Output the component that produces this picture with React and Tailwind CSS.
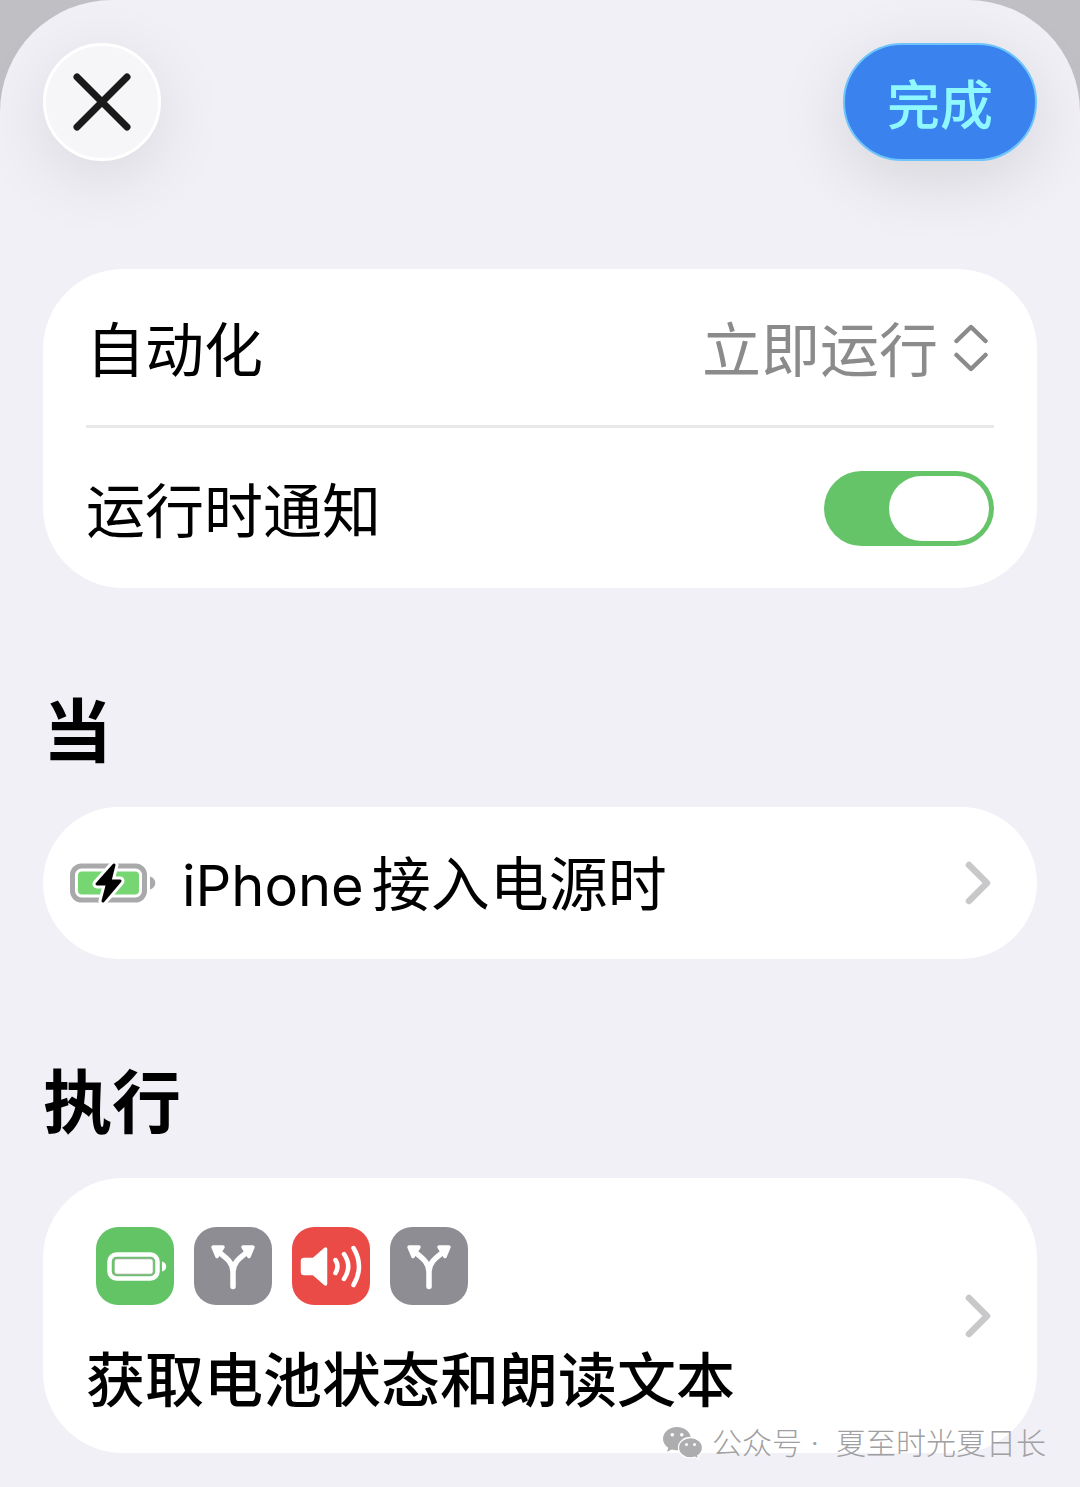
import { useState } from 'react';

const MODES = ['立即运行', '运行前询问'];

const ACTIONS = [
  { name: '获取电池状态', icon: BatteryIcon, color: 'bg-[#63c466]' },
  { name: '如果', icon: BranchIcon, color: 'bg-[#8e8d93]' },
  { name: '朗读文本', icon: SpeakerIcon, color: 'bg-[#eb4b46]' },
  { name: '结束如果', icon: BranchIcon, color: 'bg-[#8e8d93]' },
];

function BatteryIcon() {
  return (
    <svg viewBox="0 0 78 78" className="size-full" fill="none" aria-hidden="true">
      <rect x="13.5" y="27.5" width="48" height="24" rx="7" stroke="#fff" strokeWidth="4.5" />
      <rect x="18" y="31.5" width="39.5" height="16" rx="3" fill="#fff" stroke="#8fb591" strokeWidth="1.5" />
      <path d="M66 34.5c2.6.6 4.2 2.4 4.2 5s-1.6 4.4-4.2 5z" fill="#fff" />
    </svg>
  );
}

function BranchIcon() {
  return (
    <svg viewBox="0 0 78 78" className="size-full" fill="none" stroke="#fff" aria-hidden="true">
      <path d="M39 59.5V45C39 36 33 31.5 26 26M39 45C39 36 45 31.5 52 26" strokeWidth="5.5" strokeLinecap="round" />
      <path d="M19 20h10L23 29.500zM59 20h-10L55 29.500z" fill="#fff" strokeWidth="3.5" strokeLinejoin="round" />
    </svg>
  );
}

function SpeakerIcon() {
  return (
    <svg viewBox="0 0 78 78" className="size-full" fill="none" stroke="#fff" aria-hidden="true">
      <path d="M12 32.5h9.5L33.5 22v35L21.5 46.5H12c-1 0-1.5-.5-1.5-1.5V34c0-1 .5-1.5 1.5-1.5z" fill="#fff" strokeWidth="3.5" strokeLinejoin="round" />
      <path d="M43.5 33q4 6.5 0 13M52 27q8.5 12.5 0 25M61.5 21q11 18.5 0 37" strokeWidth="4.5" strokeLinecap="round" />
    </svg>
  );
}

function ChargingIcon() {
  const bolt = 'M44 2L27 21h10.5L33 38 50 18H40z';
  return (
    <svg viewBox="0 0 86 40" className="h-10 w-[86px] shrink-0" fill="none" aria-hidden="true">
      <rect x="2.5" y="3" width="72" height="34" rx="9" stroke="#a9a9ab" strokeWidth="5" />
      <rect x="8" y="8.5" width="61" height="23" rx="4" fill="#76d672" />
      <path d="M80 13.5c3.3.8 5.3 3.4 5.3 6.5s-2 5.700-5.300 6.500z" fill="#a9a9ab" />
      <path d={bolt} fill="#fff" stroke="#fff" strokeWidth="9" strokeLinejoin="round" />
      <path d={bolt} fill="#000" stroke="#000" strokeWidth="3" strokeLinejoin="round" />
    </svg>
  );
}

function Chevron() {
  return (
    <svg viewBox="0 0 30 46" className="h-[46px] w-[30px] shrink-0" fill="none" aria-hidden="true">
      <path d="M5 5l18 18L5 41" stroke="#c8c8ca" strokeWidth="6.5" strokeLinecap="round" strokeLinejoin="round" />
    </svg>
  );
}

function WechatIcon() {
  return (
    <svg viewBox="0 0 40 34" className="h-[34px] w-10 shrink-0" aria-hidden="true">
      <path d="M14 1C6.3 1 0 6.2 0 12.8c0 3.7 2 6.9 5.2 9l-1.2 4 4.8-2.4c1.6.5 3.4.8 5.2.8 7.7 0 14-5 14-11.4S21.7 1 14 1z" fill="#adadaf" />
      <path d="M27.5 11.5c-6.6 0-12 4.5-12 10.2s5.4 10.1 12 10.1c1.6 0 3-.2 4.3-.7l4 2-1-3.4c2.9-1.8 4.7-4.7 4.7-8 0-5.7-5.4-10.2-12-10.2z" fill="#adadaf" stroke="#fff" strokeWidth="1.3" />
      <g fill="#fff">
        <circle cx="9.3" cy="8.8" r="1.8" />
        <circle cx="18.8" cy="8.8" r="1.8" />
        <circle cx="23.5" cy="18.5" r="1.5" />
        <circle cx="31.5" cy="18.5" r="1.5" />
      </g>
    </svg>
  );
}

const App = () => {
  const [mode, setMode] = useState(MODES[0]);
  const [notify, setNotify] = useState(true);

  return (
    <div className="bg-[#c0bfc4] font-['Noto_Sans_CJK_SC',sans-serif] text-[59px] leading-[80px] text-black">
      <div className="relative min-h-screen rounded-t-[112px] bg-[#f1f0f6] px-[43px] pt-[43px] pb-[34px]">
        <header className="flex items-center justify-between">
          <button
            type="button"
            aria-label="关闭"
            className="flex size-[118px] items-center justify-center rounded-full border-3 border-white bg-[#f6f6f8] shadow-[0_16px_70px_rgba(0,0,0,0.1)]"
          >
            <svg viewBox="0 0 58 58" className="size-[58px]" aria-hidden="true">
              <path d="M4 4l50 50M54 4L4 54" stroke="#1a1a1a" strokeWidth="7" strokeLinecap="round" />
            </svg>
          </button>
          <button
            type="button"
            className="flex h-[118px] items-center rounded-full border-2 border-[#6fc4fb] bg-[#3a82ee] px-[42px] text-[53px] font-medium text-[#8ff8ff] shadow-[0_16px_70px_rgba(0,0,0,0.12)]"
          >
            完成
          </button>
        </header>

        <main>
          <section className="mt-[108px] rounded-[80px] bg-white px-[43px]">
            <div className="flex h-[156px] items-center justify-between">
              <label htmlFor="mode">自动化</label>
              <div className="flex items-center gap-3 pr-1 text-[#8b8b8b]">
                <select
                  id="mode"
                  value={mode}
                  onChange={(e) => setMode(e.target.value)}
                  className="field-sizing-content appearance-none bg-transparent text-right outline-none"
                >
                  {MODES.map((m) => (
                    <option key={m} value={m}>{m}</option>
                  ))}
                </select>
                <svg viewBox="0 0 40 50" className="h-[50px] w-10" fill="none" aria-hidden="true">
                  <path d="M6.500 19L21 5l14.500 14M6.500 33L21 47l14.500-14" stroke="currentColor" strokeWidth="4.5" strokeLinecap="round" strokeLinejoin="round" />
                </svg>
              </div>
            </div>
            <hr className="border-t-3 border-[#e8e8e9]" />
            <div className="flex h-[160px] items-center justify-between">
              <label htmlFor="notify">运行时通知</label>
              <input
                id="notify"
                type="checkbox"
                role="switch"
                checked={notify}
                onChange={(e) => setNotify(e.target.checked)}
                className="flex h-[75px] w-[170px] appearance-none items-center rounded-full bg-[#c9c9cb] p-[5px] before:h-[65px] before:w-[100px] before:rounded-full before:bg-white checked:justify-end checked:bg-[#65c368]"
              />
            </div>
          </section>

          <h2 className="mt-[99px] text-[69px] font-bold">当</h2>
          <button type="button" className="mt-10 flex h-[152px] w-full items-center rounded-full bg-white pr-[43px] pl-[27px] text-left">
            <ChargingIcon />
            <span className="ml-[26px] flex-1">
              <span className="mr-2 font-['Inter',sans-serif] text-[56px]">iPhone</span>
              接入电源时
            </span>
            <Chevron />
          </button>

          <h2 className="mt-[99px] text-[69px] font-bold">执行</h2>
          <button type="button" className="mt-10 flex w-full items-center rounded-[80px] bg-white px-[43px] text-left">
            <span className="flex-1 pt-[49px] pb-9">
              <span className="flex gap-5 px-[10px]">
                {ACTIONS.map(({ name, icon: Icon, color }) => (
                  <span key={name} className={`size-[78px] rounded-[22px] ${color}`}>
                    <Icon />
                  </span>
                ))}
              </span>
              <span className="mt-8 block font-medium">获取电池状态和朗读文本</span>
            </span>
            <Chevron />
          </button>
        </main>

        <footer className="absolute right-[34px] bottom-[22px] flex items-center gap-[9px] font-['Inter','Noto_Sans_CJK_SC',sans-serif] text-[30px] leading-[44px] font-light text-[#a0a0a2]">
          <WechatIcon />
          <span>公众号 ·</span>
          <span className="ml-2">夏至时光夏日长</span>
        </footer>
      </div>
    </div>
  );
};

export default App;
